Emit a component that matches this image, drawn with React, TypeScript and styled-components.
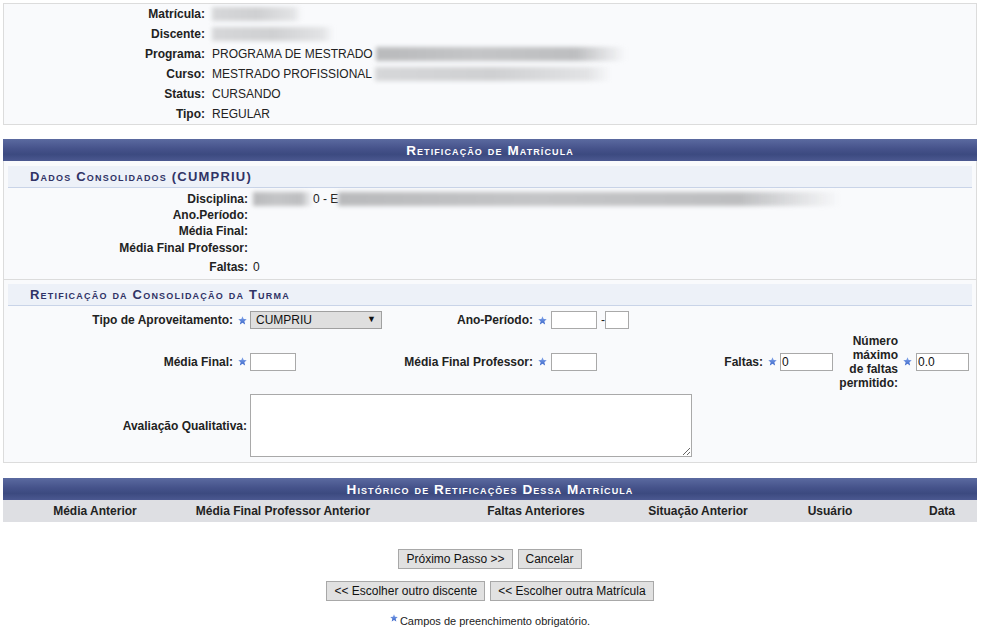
import styled, { createGlobalStyle } from 'styled-components'

const GlobalStyle = createGlobalStyle`
  html, body {
    margin: 0;
    padding: 0;
    background: #ffffff;
    font-family: 'Liberation Sans', Arial, sans-serif;
    font-size: 12px;
    color: #222222;
  }
`

const Page = styled.div`
  width: 974px;
  margin: 3px 0 0 3px;
  display: flex;
  flex-direction: column;
`

const InfoBox = styled.div`
  background: #f9fafc;
  border: 1px solid #dcdcdc;
  display: grid;
  grid-template-columns: 198px 1fr;
  grid-auto-rows: 20px;
  column-gap: 7px;
  padding: 0 3px;
`

const Label = styled.div<{ $wrap?: boolean }>`
  font-weight: bold;
  text-align: right;
  color: #222;
  display: flex;
  align-items: center;
  justify-content: flex-end;
  white-space: ${(p) => (p.$wrap ? 'normal' : 'nowrap')};
  line-height: 14px;
`

const Value = styled.div<{ $tight?: boolean }>`
  display: flex;
  align-items: center;
  white-space: nowrap;
  gap: ${(p) => (p.$tight ? 0 : 3)}px;
`

const Blur = styled.span<{ $w: number; $light?: boolean }>`
  display: inline-block;
  width: ${(p) => p.$w}px;
  height: 14px;
  background: ${(p) =>
    p.$light
      ? 'linear-gradient(90deg, #d6d7d9, #cfd0d2 50%, #e2e3e5 90%, rgba(240,241,243,0))'
      : 'linear-gradient(90deg, #b9babc, #c4c5c7 40%, #bdbec0 80%, rgba(230,231,233,0))'};
  filter: blur(2px);
`

const SectionBar = styled.div<{ $mt: number }>`
  margin-top: ${(p) => p.$mt}px;
  height: 22px;
  background: linear-gradient(#5b6aa0 0%, #45528a 45%, #3c4a80 70%, #4b5890 100%);
  color: #ffffff;
  font-weight: bold;
  font-size: 13.5px;
  font-variant: small-caps;
  letter-spacing: 1.1px;
  display: flex;
  align-items: center;
  justify-content: center;
`

const SectionBody = styled.div`
  background: #f9fafc;
  border: 1px solid #dcdcdc;
  border-top: none;
  display: flex;
  flex-direction: column;
`

const SubHeader = styled.div<{ $mt: number }>`
  margin: ${(p) => p.$mt}px 4px 0 4px;
  height: 21px;
  background: #edf1f8;
  border-bottom: 1px solid #c9d4e8;
  color: #303366;
  font-weight: bold;
  font-size: 13px;
  font-variant: small-caps;
  letter-spacing: 1.2px;
  padding-left: 22px;
  display: flex;
  align-items: center;
`

const DadosGrid = styled.div`
  display: grid;
  grid-template-columns: 240px 1fr;
  grid-template-rows: 16px 16px 16px 17px 22px;
  column-gap: 5px;
  padding: 3px 4px 1px 4px;
  border-bottom: 1px solid #dcdcdc;
`

const FormGrid = styled.div`
  display: grid;
  grid-template-columns: 226px 16px 145px 139px 17px 149px 64px 16px 56px 63px 17px 54px;
  grid-template-rows: 28px 55px 73px;
  padding: 0 4px;
`

const Cell = styled.div<{ $span?: number }>`
  display: flex;
  align-items: center;
  grid-column: ${(p) => (p.$span ? `span ${p.$span}` : 'auto')};
  gap: 4px;
`

const StarCell = styled.div`
  display: flex;
  align-items: center;
  justify-content: center;
`

const FormLabel = styled(Label)<{ $span?: number; $pr?: number }>`
  grid-column: ${(p) => (p.$span ? `span ${p.$span}` : 'auto')};
  padding-right: ${(p) => p.$pr ?? 1}px;
`

const Input = styled.input<{ $w: number; $ml?: number }>`
  width: ${(p) => p.$w}px;
  height: 18px;
  box-sizing: border-box;
  border: 1px solid #a9a9a9;
  background: #ffffff;
  font-family: 'Liberation Sans', Arial, sans-serif;
  font-size: 12px;
  padding: 0 1px;
  margin: 0 0 0 ${(p) => p.$ml ?? 0}px;
  color: #111;
`

const SelectBox = styled.div`
  position: relative;
  width: 132px;
  height: 18px;
`

const Select = styled.select`
  appearance: none;
  width: 100%;
  height: 100%;
  box-sizing: border-box;
  border: 1px solid #a0a0a0;
  background: #dfdfdf;
  font-family: 'Liberation Sans', Arial, sans-serif;
  font-size: 12px;
  padding: 0 5px;
  color: #111;
  margin: 0;
`

const Arrow = styled.span`
  position: absolute;
  right: 6px;
  top: 3px;
  font-size: 9px;
  pointer-events: none;
  color: #111;
`

const TextArea = styled.textarea`
  width: 442px;
  height: 63px;
  box-sizing: border-box;
  border: 1px solid #a9a9a9;
  background: #fff;
  margin: 0;
  resize: both;
`

const HistHead = styled.div`
  height: 22px;
  background: #dedfe3;
  display: grid;
  grid-template-columns: 184px 192px 244px 150px 114px 90px;
  align-items: center;
`

const HistCol = styled.div<{ $pl?: number }>`
  font-weight: bold;
  text-align: center;
  white-space: nowrap;
  padding-left: ${(p) => p.$pl || 0}px;
`

const ButtonRow = styled.div<{ $mt: number }>`
  margin-top: ${(p) => p.$mt}px;
  display: flex;
  justify-content: center;
  gap: 5px;
`

const Button = styled.button`
  height: 20px;
  box-sizing: border-box;
  border: 1px solid #a8a8a8;
  background: #e1e1e1;
  font-family: 'Liberation Sans', Arial, sans-serif;
  font-size: 12px;
  padding: 0 7px;
  color: #111;
`

const Note = styled.div`
  margin-top: 14px;
  display: flex;
  justify-content: center;
  align-items: flex-start;
  gap: 2px;
  font-size: 11px;
  line-height: 13px;
  color: #222;
`

const NoteStar = styled.span`
  display: flex;
  margin-top: -1px;
`

const Star = ({ size = 9 }: { size?: number }) => (
  <svg width={size} height={size} viewBox="0 0 10 10">
    <defs>
      <linearGradient id="sg" x1="0" y1="0" x2="0" y2="1">
        <stop offset="0" stopColor="#86a8ec" />
        <stop offset="1" stopColor="#3763c8" />
      </linearGradient>
    </defs>
    <polygon
      points="5,0.3 6.3,3.4 9.7,3.6 7.1,5.8 7.9,9.4 5,7.5 2.1,9.4 2.9,5.8 0.3,3.6 3.7,3.4"
      fill="url(#sg)"
    />
  </svg>
)

export default function App() {
  return (
    <Page>
      <GlobalStyle />
      <InfoBox>
        <Label>Matrícula:</Label>
        <Value>
          <Blur $w={90} $light />
        </Value>
        <Label>Discente:</Label>
        <Value>
          <Blur $w={122} $light />
        </Value>
        <Label>Programa:</Label>
        <Value>
          PROGRAMA DE MESTRADO <Blur $w={250} />
        </Value>
        <Label>Curso:</Label>
        <Value>
          MESTRADO PROFISSIONAL <Blur $w={236} $light />
        </Value>
        <Label>Status:</Label>
        <Value>CURSANDO</Value>
        <Label>Tipo:</Label>
        <Value>REGULAR</Value>
      </InfoBox>

      <SectionBar $mt={14}>Retificação de Matrícula</SectionBar>
      <SectionBody>
        <SubHeader $mt={5}>Dados Consolidados (CUMPRIU)</SubHeader>
        <DadosGrid>
          <Label>Disciplina:</Label>
          <Value $tight>
            <Blur $w={60} />0 - E<Blur $w={502} />
          </Value>
          <Label>Ano.Período:</Label>
          <Value />
          <Label>Média Final:</Label>
          <Value />
          <Label>Média Final Professor:</Label>
          <Value />
          <Label>Faltas:</Label>
          <Value>0</Value>
        </DadosGrid>

        <SubHeader $mt={4}>Retificação da Consolidação da Turma</SubHeader>
        <FormGrid>
          <FormLabel>Tipo de Aproveitamento:</FormLabel>
          <StarCell>
            <Star />
          </StarCell>
          <Cell>
            <SelectBox>
              <Select defaultValue="CUMPRIU">
                <option>CUMPRIU</option>
              </Select>
              <Arrow>▼</Arrow>
            </SelectBox>
          </Cell>
          <FormLabel>Ano-Período:</FormLabel>
          <StarCell>
            <Star />
          </StarCell>
          <Cell $span={7}>
            <Input $w={46} />-
            <Input $w={24} $ml={-4} />
          </Cell>

          <FormLabel>Média Final:</FormLabel>
          <StarCell>
            <Star />
          </StarCell>
          <Cell>
            <Input $w={46} />
          </Cell>
          <FormLabel>Média Final Professor:</FormLabel>
          <StarCell>
            <Star />
          </StarCell>
          <Cell>
            <Input $w={46} />
          </Cell>
          <FormLabel>Faltas:</FormLabel>
          <StarCell>
            <Star />
          </StarCell>
          <Cell>
            <Input $w={53} defaultValue="0" />
          </Cell>
          <FormLabel $wrap>Número máximo de faltas permitido:</FormLabel>
          <StarCell>
            <Star />
          </StarCell>
          <Cell>
            <Input $w={53} defaultValue="0.0" />
          </Cell>

          <FormLabel $span={2} $pr={3}>
            Avaliação Qualitativa:
          </FormLabel>
          <Cell $span={10}>
            <TextArea />
          </Cell>
        </FormGrid>
      </SectionBody>

      <SectionBar $mt={15}>Histórico de Retificações Dessa Matrícula</SectionBar>
      <HistHead>
        <HistCol>Média Anterior</HistCol>
        <HistCol>Média Final Professor Anterior</HistCol>
        <HistCol $pl={70}>Faltas Anteriores</HistCol>
        <HistCol>Situação Anterior</HistCol>
        <HistCol>Usuário</HistCol>
        <HistCol $pl={20}>Data</HistCol>
      </HistHead>

      <ButtonRow $mt={27}>
        <Button>Próximo Passo &gt;&gt;</Button>
        <Button>Cancelar</Button>
      </ButtonRow>
      <ButtonRow $mt={12}>
        <Button>&lt;&lt; Escolher outro discente</Button>
        <Button>&lt;&lt; Escolher outra Matrícula</Button>
      </ButtonRow>
      <Note>
        <NoteStar>
          <Star size={8} />
        </NoteStar>
        Campos de preenchimento obrigatório.
      </Note>
    </Page>
  )
}
